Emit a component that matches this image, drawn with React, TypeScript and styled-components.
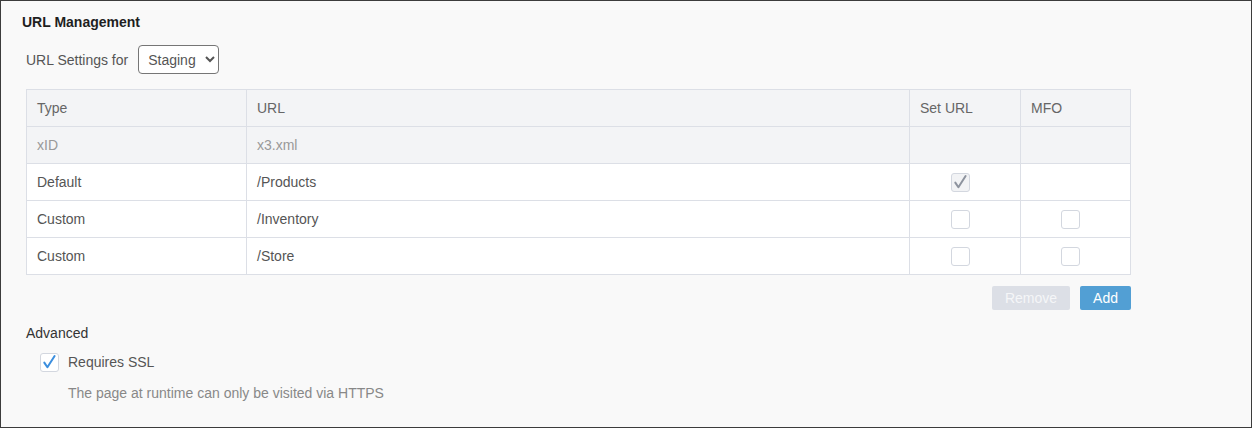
import styled, {createGlobalStyle} from 'styled-components';

const GlobalStyle = createGlobalStyle`
  html, body {
    margin: 0;
    padding: 0;
    background: #f9f9f9;
  }
  body {
    font-family: "Liberation Sans", Arial, sans-serif;
  }
`;

type Row = {
  type: string;
  url: string;
  setUrl: 'none' | 'checked' | 'empty';
  mfo: boolean;
  muted?: boolean;
};

const rows: Row[] = [
  {type: 'xID', url: 'x3.xml', setUrl: 'none', mfo: false, muted: true},
  {type: 'Default', url: '/Products', setUrl: 'checked', mfo: false},
  {type: 'Custom', url: '/Inventory', setUrl: 'empty', mfo: true},
  {type: 'Custom', url: '/Store', setUrl: 'empty', mfo: true},
];

const CheckMark = ({color}: {color: string}) => (
  <svg width="19" height="19" viewBox="0 0 19 19">
    <path
      d="M4.3 9.6 L7.4 14.2 L14.6 3"
      fill="none"
      stroke={color}
      strokeWidth="2"
      strokeLinecap="round"
      strokeLinejoin="round"
    />
  </svg>
);

type BoxProps = {checked?: boolean; disabled?: boolean};

const CheckBox = ({checked, disabled}: BoxProps) => (
  <Box $disabled={disabled}>
    {checked && <CheckMark color={disabled ? '#8d939e' : '#3b8ede'} />}
  </Box>
);

const App = () => {
  return (
    <>
      <GlobalStyle />
      <Frame>
        <Title>URL Management</Title>
        <Section>
          <SettingsRow>
            <Label>URL Settings for</Label>
            <Select defaultValue="Staging">
              <option>Staging</option>
              <option>Production</option>
            </Select>
          </SettingsRow>

          <Table>
            <colgroup>
              <col style={{width: 220}} />
              <col style={{width: 663}} />
              <col style={{width: 111}} />
              <col style={{width: 110}} />
            </colgroup>
            <thead>
              <tr>
                <Th>Type</Th>
                <Th>URL</Th>
                <Th>Set URL</Th>
                <Th>MFO</Th>
              </tr>
            </thead>
            <tbody>
              {rows.map((row, i) => (
                <Tr key={i} $muted={row.muted}>
                  <Td>{row.type}</Td>
                  <Td>{row.url}</Td>
                  <BoxCell>
                    {row.setUrl === 'checked' && <CheckBox checked disabled />}
                    {row.setUrl === 'empty' && <CheckBox />}
                  </BoxCell>
                  <BoxCell>{row.mfo && <CheckBox />}</BoxCell>
                </Tr>
              ))}
            </tbody>
          </Table>

          <Actions>
            <Button $variant="disabled">Remove</Button>
            <Button $variant="primary">Add</Button>
          </Actions>

          <Heading>Advanced</Heading>
          <Option>
            <CheckBox checked />
            <OptionLabel>Requires SSL</OptionLabel>
          </Option>
          <Hint>The page at runtime can only be visited via HTTPS</Hint>
        </Section>
      </Frame>
    </>
  );
};

const Frame = styled.div`
  box-sizing: border-box;
  height: 428px;
  border: 1px solid #3c3c3c;
  background: #f9f9f9;
  padding: 11px 21px 0;
`;
const Title = styled.div`
  font-size: 14px;
  font-weight: bold;
  line-height: 20px;
  color: #1f1f1f;
`;
const Section = styled.div`
  margin-left: 4px;
  width: 1105px;
`;
const SettingsRow = styled.div`
  display: flex;
  align-items: center;
  gap: 10px;
  margin-top: 13px;
  height: 29px;
`;
const Label = styled.span`
  font-size: 14px;
  color: #555;
`;
const Select = styled.select`
  box-sizing: border-box;
  width: 81px;
  height: 29px;
  padding: 0 4px 0 5px;
  font-family: "Liberation Sans", Arial, sans-serif;
  font-size: 14px;
  color: #555;
  background: #fff;
  border: 1px solid #767676;
  border-radius: 4px;
`;
const Table = styled.table`
  margin-top: 15px;
  width: 1104px;
  table-layout: fixed;
  border-collapse: collapse;
  font-size: 14px;
`;
const Th = styled.th`
  height: 36px;
  padding: 0 10px;
  text-align: left;
  font-weight: normal;
  color: #666;
  background: #f3f4f6;
  border: 1px solid #dcdfe6;
`;
const Tr = styled.tr<{$muted?: boolean}>`
  background: ${p => (p.$muted ? '#f3f4f6' : '#fff')};
  color: ${p => (p.$muted ? '#999' : '#555')};
`;
const Td = styled.td`
  height: 36px;
  padding: 0 10px;
  border: 1px solid #dcdfe6;
`;
const BoxCell = styled(Td)`
  padding: 0 12px 0 2px;
  text-align: center;
  line-height: 0;
`;
const Box = styled.span<{$disabled?: boolean}>`
  box-sizing: border-box;
  display: inline-block;
  width: 19px;
  height: 19px;
  border: 1px solid #d3d7df;
  border-radius: 3px;
  background: ${p => (p.$disabled ? '#f2f3f5' : '#fff')};
  vertical-align: middle;
  svg {
    display: block;
    margin: -1px;
  }
`;
const Actions = styled.div`
  display: flex;
  justify-content: flex-end;
  gap: 10px;
  margin-top: 11px;
`;
const Button = styled.button<{$variant: 'primary' | 'disabled'}>`
  height: 24px;
  padding: 0 13px;
  border: 0;
  border-radius: 2px;
  font-family: "Liberation Sans", Arial, sans-serif;
  font-size: 14px;
  cursor: ${p => (p.$variant === 'primary' ? 'pointer' : 'default')};
  color: ${p => (p.$variant === 'primary' ? '#fff' : '#f5f6f8')};
  background: ${p => (p.$variant === 'primary' ? '#529fd4' : '#dcdfe6')};
`;
const Heading = styled.div`
  margin-top: 13px;
  font-size: 14px;
  line-height: 20px;
  color: #333;
`;
const Option = styled.div`
  display: flex;
  align-items: center;
  gap: 9px;
  margin-top: 9px;
  margin-left: 14px;
  height: 20px;
`;
const OptionLabel = styled.span`
  font-size: 14px;
  color: #555;
`;
const Hint = styled.div`
  margin-top: 11px;
  margin-left: 42px;
  font-size: 14px;
  line-height: 20px;
  color: #888;
`;

export default App;
